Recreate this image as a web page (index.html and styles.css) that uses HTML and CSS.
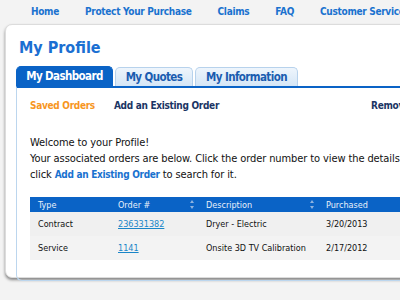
FILE: index.html
```html
<!DOCTYPE html>
<html>
<head>
    <title>My Profile</title>
    <meta charset="UTF-8">
    <link rel="stylesheet" href="styles.css">
</head>
<body>

<div id="topnav">
    <a href="#">Home</a>
    <a href="#">Protect Your Purchase</a>
    <a href="#">Claims</a>
    <a href="#">FAQ</a>
    <a href="#">Customer Service</a>
</div>

<div id="card">
    <h1>My Profile</h1>

    <div class="tabs">
        <div class="tab tab-dash active">My Dashboard</div>
        <div class="tab tab-quotes">My Quotes</div>
        <div class="tab tab-info">My Information</div>
    </div>

    <div class="panel">
        <div class="subnav">
            <a href="#" class="current">Saved Orders</a>
            <a href="#">Add an Existing Order</a>
            <a href="#" class="right">Remove Orders</a>
        </div>

        <div class="intro">
            Welcome to your Profile!<br>
            Your associated orders are below. Click the order number to view the details. If you don't see your order,<br>
            click <a href="#">Add an Existing Order</a> to search for it.
        </div>

        <table>
            <thead>
                <tr>
                    <th class="c-type">Type</th>
                    <th class="c-order">Order #<span class="sort"></span></th>
                    <th class="c-desc">Description<span class="sort"></span></th>
                    <th class="c-date">Purchased<span class="sort"></span></th>
                </tr>
            </thead>
            <tbody>
                <tr>
                    <td>Contract</td>
                    <td><a href="#">236331382</a></td>
                    <td>Dryer - Electric</td>
                    <td>3/20/2013</td>
                </tr>
                <tr>
                    <td>Service</td>
                    <td><a href="#">1141</a></td>
                    <td>Onsite 3D TV Calibration</td>
                    <td>2/17/2012</td>
                </tr>
            </tbody>
        </table>
    </div>
</div>

</body>
</html>
```

FILE: styles.css
```css
body{
    margin: 0;
    background-color: #f3f3f3;
    font-family: "DejaVu Sans Condensed", "DejaVu Sans", sans-serif;
    font-size: 11px;
    color: #111;
    overflow: hidden;
    width: 400px;
    height: 300px;
}

a{
    text-decoration: none;
}

#topnav{
    display: flex;
    gap: 26px;
    padding: 5px 0 0 31px;
    height: 19px;
    white-space: nowrap;
}
#topnav a{
    color: #1a72cf;
    font-weight: bold;
    font-size: 10px;
    letter-spacing: -0.3px;
    line-height: 14px;
}

#card{
    margin-left: 5px;
    width: 440px;
    height: 254px;
    box-sizing: border-box;
    background-color: #ffffff;
    border: 1px solid #dcdcdc;
    border-radius: 7px;
    box-shadow: 0 2px 3px rgba(0,0,0,0.45);
    padding: 13px 0 0 10px;
}

h1{
    margin: 0 0 8px 3px;
    font-size: 16px;
    line-height: 20px;
    color: #1b6fd2;
}

.tabs{
    display: flex;
    gap: 2px;
    height: 20px;
    align-items: flex-end;
}
.tab{
    box-sizing: border-box;
    height: 19px;
    text-align: center;
    line-height: 18px;
    font-size: 11.5px;
    letter-spacing: -0.6px;
    font-weight: bold;
    color: #1a5cb0;
    background: linear-gradient(#eef5fc, #d5e6f6);
    border: 1px solid #b7d2ec;
    border-bottom: none;
    border-radius: 5px 5px 0 0;
}
.tab.active{
    height: 20px;
    line-height: 19px;
    color: #ffffff;
    background: #0a63c6;
    border-color: #0a63c6;
}
.tab-dash{ width: 97px; }
.tab-quotes{ width: 78px; }
.tab-info{ width: 103px; }

.panel{
    border-top: 2px solid #0a63c6;
    border-left: 1px solid #bcd6ee;
    border-bottom: 1px solid #bcd6ee;
    border-bottom-left-radius: 6px;
    height: 181px;
    padding: 11px 0 0 13px;
    white-space: nowrap;
}

.subnav{
    display: flex;
    gap: 19px;
    line-height: 14px;
}
.subnav a{
    font-weight: bold;
    font-size: 10px;
    letter-spacing: -0.3px;
    color: #1b3564;
}
.subnav a.current{
    color: #f7961e;
}
.subnav a.right{
    margin-left: 133px;
}

.intro{
    margin-top: 22px;
    line-height: 16px;
    letter-spacing: -0.1px;
}
.intro a{
    color: #1a72cf;
    font-weight: bold;
    font-size: 10px;
    letter-spacing: -0.3px;
}

table{
    margin-top: 14px;
    border-collapse: collapse;
    table-layout: fixed;
    width: 400px;
    font-size: 9px;
}
th{
    background-color: #0a63c6;
    color: #e8f0fa;
    font-weight: normal;
    text-align: left;
    height: 15px;
    padding: 0 0 0 8px;
    position: relative;
}
td{
    background-color: #f0f0f0;
    height: 24px;
    padding: 0 0 0 8px;
}
tbody tr + tr td{
    background-color: #f3f3f3;
}
td a{
    color: #1a86c8;
    text-decoration: underline;
}
.c-type{ width: 72px; }
.c-order{ width: 80px; }
.c-desc{ width: 112px; }

.sort{
    position: absolute;
    right: 3px;
    top: 3px;
    width: 5px;
    height: 9px;
}
.sort::before,
.sort::after{
    content: "";
    position: absolute;
    left: 0;
    border-left: 2.5px solid transparent;
    border-right: 2.5px solid transparent;
}
.sort::before{
    top: 0;
    border-bottom: 3px solid #8fb3e0;
}
.sort::after{
    bottom: 0;
    border-top: 3px solid #8fb3e0;
}
```
